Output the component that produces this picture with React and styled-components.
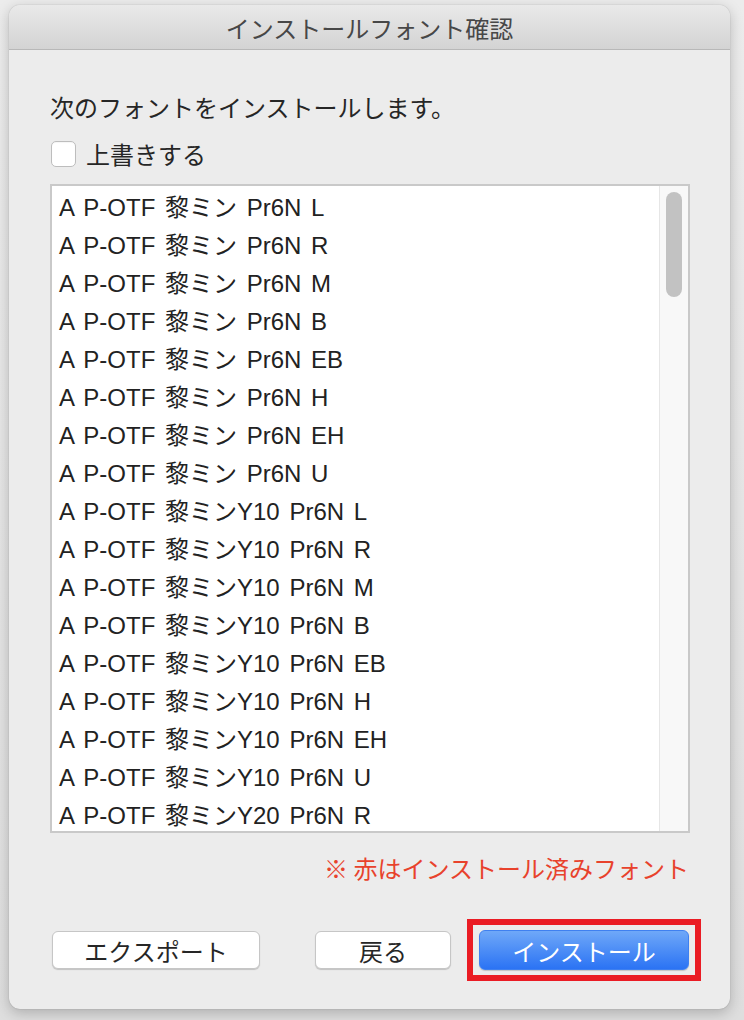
import styled, { createGlobalStyle } from 'styled-components';

const GlobalStyle = createGlobalStyle`
  html, body {
    margin: 0;
    padding: 0;
  }
  body {
    background: #e4e4e4;
    font-family: "Liberation Sans", "Noto Sans CJK JP", sans-serif;
    color: #262626;
  }
`

const Page = styled.div`
  width: 744px;
  height: 1020px;
  padding: 5px 14px 0 9px;
  box-sizing: border-box;
  background: linear-gradient(to bottom, #ececec, #dedede);
`

const Window = styled.div`
  width: 721px;
  height: 1004px;
  display: flex;
  flex-direction: column;
  background: #ececec;
  border-radius: 11px;
  box-shadow: 0 0 1px rgba(0, 0, 0, 0.35), 0 4px 14px rgba(0, 0, 0, 0.22);
  overflow: hidden;
`

const TitleBar = styled.div`
  height: 44px;
  flex: none;
  display: flex;
  align-items: center;
  justify-content: center;
  background: linear-gradient(to bottom, #e9e9e9, #d3d3d3);
  border-bottom: 1px solid #b8b8b8;
  font-family: "Noto Sans CJK JP", sans-serif;
  font-size: 24px;
  color: #474747;
`

const Body = styled.div`
  flex: 1;
  display: flex;
  flex-direction: column;
  padding: 42px 40px 0 41px;
`

const Text = styled.div`
  font-family: "Noto Sans CJK JP", sans-serif;
  font-size: 24px;
  line-height: 30px;
  color: ${p => p.color || '#262626'};
  text-align: ${p => p.align || 'left'};
`

const CheckRow = styled.label`
  display: flex;
  align-items: center;
  gap: 10px;
  margin-top: 18px;
  padding-left: 1px;
  height: 27px;
`

const Box = styled.span`
  width: 25px;
  height: 26px;
  box-sizing: border-box;
  background: #ffffff;
  border: 1px solid #bdbdbd;
  border-radius: 5px;
  box-shadow: inset 0 1px 1px rgba(0, 0, 0, 0.04);
`

const List = styled.div`
  margin-top: 17px;
  height: 649px;
  box-sizing: border-box;
  border: 2px solid #c9c9c9;
  background: #ffffff;
  display: flex;
  overflow: hidden;
`

const Rows = styled.div`
  flex: 1;
  padding: 3px 0 0 7px;
  overflow: hidden;
`

const Row = styled.div`
  height: 38px;
  line-height: 38px;
  font-size: 24px;
  white-space: nowrap;
  word-spacing: 3px;
  color: #222222;
`

const Track = styled.div`
  width: 29px;
  flex: none;
  background: #f8f8f8;
  border-left: 1px solid #e6e6e6;
  padding-top: 6px;
  box-sizing: border-box;
  display: flex;
  justify-content: center;
`

const Thumb = styled.div`
  width: 16px;
  height: 105px;
  border-radius: 8px;
  background: #c2c2c2;
`

const Note = styled(Text)`
  margin-top: 20px;
  padding-right: 1px;
`

const ButtonRow = styled.div`
  display: flex;
  align-items: center;
  margin: 36px -11px 0 2px;
`

const Button = styled.button`
  height: ${p => p.primary ? 40 : 38}px;
  width: ${p => p.w}px;
  box-sizing: border-box;
  border-radius: 6px;
  font-family: "Noto Sans CJK JP", sans-serif;
  font-size: 24px;
  cursor: pointer;
  padding: 0;
  color: ${p => p.primary ? '#ffffff' : '#262626'};
  background: ${p => p.primary
    ? 'linear-gradient(to bottom, #6fa8f8, #2b73f4)'
    : '#ffffff'};
  border: 1px solid ${p => p.primary ? '#3f80f0' : '#c6c6c6'};
  box-shadow: 0 1px 1px rgba(0, 0, 0, 0.18);
`

const Spacer = styled.div`
  flex: 1;
`

const Highlight = styled.div`
  margin-left: 16px;
  border: 6px solid #ea1c24;
  padding: 5px 6px 5px 6px;
  display: flex;
`

const fonts = [
  'A P-OTF 黎ミン Pr6N L',
  'A P-OTF 黎ミン Pr6N R',
  'A P-OTF 黎ミン Pr6N M',
  'A P-OTF 黎ミン Pr6N B',
  'A P-OTF 黎ミン Pr6N EB',
  'A P-OTF 黎ミン Pr6N H',
  'A P-OTF 黎ミン Pr6N EH',
  'A P-OTF 黎ミン Pr6N U',
  'A P-OTF 黎ミンY10 Pr6N L',
  'A P-OTF 黎ミンY10 Pr6N R',
  'A P-OTF 黎ミンY10 Pr6N M',
  'A P-OTF 黎ミンY10 Pr6N B',
  'A P-OTF 黎ミンY10 Pr6N EB',
  'A P-OTF 黎ミンY10 Pr6N H',
  'A P-OTF 黎ミンY10 Pr6N EH',
  'A P-OTF 黎ミンY10 Pr6N U',
  'A P-OTF 黎ミンY20 Pr6N R',
]

export default function App() {
  return (
    <Page>
      <GlobalStyle />
      <Window>
        <TitleBar>インストールフォント確認</TitleBar>
        <Body>
          <Text>次のフォントをインストールします。</Text>
          <CheckRow>
            <Box />
            <Text>上書きする</Text>
          </CheckRow>
          <List>
            <Rows>
              {fonts.map(f => <Row key={f}>{f}</Row>)}
            </Rows>
            <Track>
              <Thumb />
            </Track>
          </List>
          <Note color="#e8422c" align="right">※ 赤はインストール済みフォント</Note>
          <ButtonRow>
            <Button w={208}>エクスポート</Button>
            <Spacer />
            <Button w={136}>戻る</Button>
            <Highlight>
              <Button primary w={210}>インストール</Button>
            </Highlight>
          </ButtonRow>
        </Body>
      </Window>
    </Page>
  )
}
